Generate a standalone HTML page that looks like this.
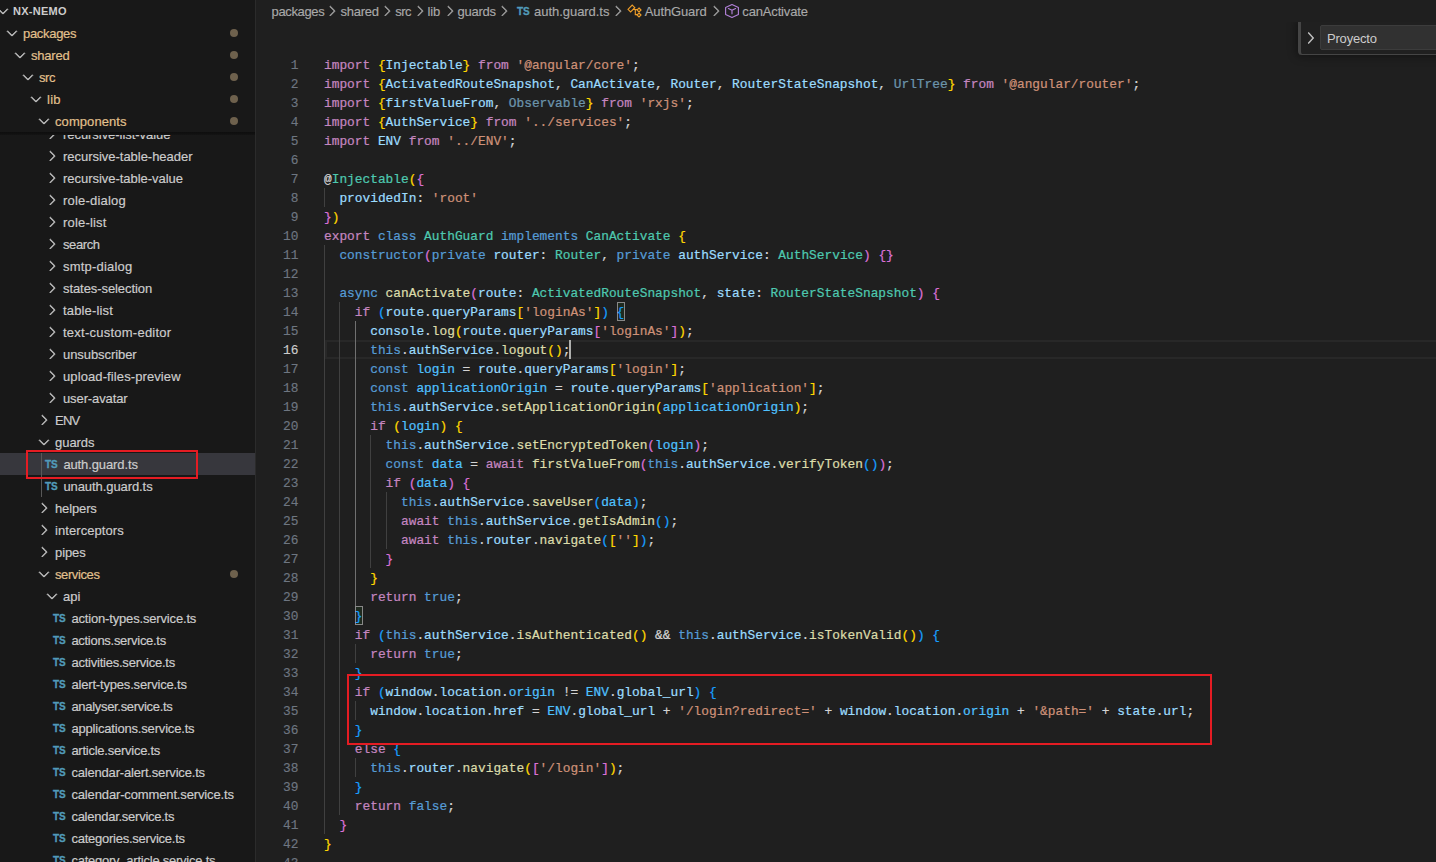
<!DOCTYPE html>
<html lang="en"><head><meta charset="utf-8"><title>auth.guard.ts - nx-nemo</title>
<style>
*{box-sizing:border-box;margin:0;padding:0}
html,body{width:1436px;height:862px;overflow:hidden;background:#1f1f1f}
body{position:relative;font-family:"Liberation Sans",sans-serif;font-size:13px;color:#ccc}
#sb{position:absolute;left:0;top:0;width:256px;height:862px;background:#181818;border-right:1px solid #2b2b2b;overflow:hidden}
#sbs{position:absolute;left:0;top:0;width:255px;height:862px;overflow:hidden}
#stk{position:absolute;left:0;top:0;width:255px;height:132px;background:#181818;z-index:3}
#stk:after{content:'';position:absolute;left:0;top:132px;width:255px;height:3px;background:linear-gradient(#0e0e0e,#111 70%,#151515)}
.hd{position:absolute;left:0;top:0;width:255px;height:22px;line-height:22px}
.hd .cv{left:-5px}
.hd b{position:absolute;left:13px;top:0;font-size:11px;font-weight:700;color:#ccc;letter-spacing:.26px}
.row{position:absolute;left:0;width:255px;height:22px;line-height:22px;white-space:nowrap}
.row.sel{background:#37373d}
.row.mod .lb{color:#e2c08d}
.cv{position:absolute;top:3px;width:16px;height:16px}
.chev{width:16px;height:16px;fill:#ccc;stroke:#ccc;stroke-width:.55;display:block}
.lb{position:absolute;top:1px;-webkit-text-stroke:.18px}
.ts{position:absolute;top:1px;font-size:10px;font-weight:700;color:#519aba;letter-spacing:0;-webkit-text-stroke:.3px}
.dot{position:absolute;left:229.5px;top:7px;width:8px;height:8px;border-radius:50%;background:#6e614d}
.tg{position:absolute;width:1px;background:#585858;z-index:1}
.anno{position:absolute;border:2px solid #e51c23;z-index:9}
#ed{position:absolute;left:256px;top:0;width:1180px;height:862px;background:#1f1f1f;overflow:hidden}
#bc{position:absolute;left:0;top:0;width:1436px;height:22px;line-height:22px;color:#a9a9a9;white-space:nowrap;font-size:13px}
.bt{position:absolute;top:1px;-webkit-text-stroke:.15px}
.bi{position:absolute;top:3px;width:16px;height:16px}
.bi svg{width:16px;height:16px;display:block}
.bcv{fill:#a9a9a9;stroke:#a9a9a9;stroke-width:.55}
#code{position:absolute;left:0;top:0;width:1436px;height:862px;font-family:"Liberation Mono",monospace;font-size:12.83px;color:#d4d4d4;overflow:hidden}
.ln{position:absolute;left:256px;width:42.5px;height:19px;line-height:19px;text-align:right;color:#6e7681;white-space:pre;-webkit-text-stroke:.15px}
.ln.act{color:#ccc}
.cl{position:absolute;left:324px;height:19px;line-height:19px;white-space:pre;-webkit-text-stroke:.22px}
.k-k{color:#C586C0}.k-b{color:#569CD6}.k-v{color:#9CDCFE}.k-t{color:#4EC9B0}.k-f{color:#DCDCAA}.k-s{color:#CE9178}
.k-c{color:#4FC1FF}.k-1{color:#FFD700}.k-2{color:#DA70D6}.k-3{color:#179FFF}.k-d{color:#9CDCFE;opacity:.62}
.bm{position:absolute;width:8px;height:19px;border:1px solid #888;background:#1f2a1f}
.cur{position:absolute;left:569px;top:340px;width:2px;height:19px;background:#aeafad}
.ig{position:absolute;width:1px;background:#404040}
.ig.a{background:#707070}
#clh{position:absolute;left:325px;top:340px;width:1115px;height:19px;border:2px solid #282828}
#fwc{position:absolute;left:1270px;top:22px;width:166px;height:60px;overflow:hidden}
#fw{position:absolute;left:28px;top:0;width:150px;height:33px;background:#202020;border-left:3px solid #454545;border-bottom:1px solid #454545;border-bottom-left-radius:4px;box-shadow:0 0 8px 2px rgba(0,0,0,.36)}
#fw .in{position:absolute;left:19px;top:3px;width:140px;height:25px;background:#313131;border:1px solid #3c3c3c;border-radius:2px;line-height:25px;padding-left:6px;color:#ccc;font-size:13px;letter-spacing:-.2px}
#fw svg{position:absolute;left:2px;top:8px;width:16px;height:16px;fill:#ccc;stroke:#ccc;stroke-width:.5}
</style></head><body>
<div id="ed"></div>
<div id="code">
<div id="clh"></div><i class="bm" style="left:617px;top:302px"></i><i class="bm" style="left:355px;top:606px"></i><i class="cur"></i>
<i class="ig" style="left:324.0px;top:188px;height:19px"></i>
<i class="ig" style="left:324.0px;top:245px;height:589px"></i>
<i class="ig" style="left:339.4px;top:302px;height:513px"></i>
<i class="ig a" style="left:354.8px;top:321px;height:285px"></i>
<i class="ig" style="left:370.2px;top:435px;height:133px"></i>
<i class="ig" style="left:385.6px;top:492px;height:57px"></i>
<i class="ig" style="left:354.8px;top:644px;height:19px"></i>
<i class="ig" style="left:354.8px;top:701px;height:19px"></i>
<i class="ig" style="left:354.8px;top:758px;height:19px"></i>
<div class="ln" style="top:56px">1</div><div class="cl" style="top:56px"><span class="k-k">import</span> <span class="k-1">{</span><span class="k-v">Injectable</span><span class="k-1">}</span> <span class="k-k">from</span> <span class="k-s">'@angular/core'</span>;</div>
<div class="ln" style="top:75px">2</div><div class="cl" style="top:75px"><span class="k-k">import</span> <span class="k-1">{</span><span class="k-v">ActivatedRouteSnapshot</span>, <span class="k-v">CanActivate</span>, <span class="k-v">Router</span>, <span class="k-v">RouterStateSnapshot</span>, <span class="k-d">UrlTree</span><span class="k-1">}</span> <span class="k-k">from</span> <span class="k-s">'@angular/router'</span>;</div>
<div class="ln" style="top:94px">3</div><div class="cl" style="top:94px"><span class="k-k">import</span> <span class="k-1">{</span><span class="k-v">firstValueFrom</span>, <span class="k-d">Observable</span><span class="k-1">}</span> <span class="k-k">from</span> <span class="k-s">'rxjs'</span>;</div>
<div class="ln" style="top:113px">4</div><div class="cl" style="top:113px"><span class="k-k">import</span> <span class="k-1">{</span><span class="k-v">AuthService</span><span class="k-1">}</span> <span class="k-k">from</span> <span class="k-s">'../services'</span>;</div>
<div class="ln" style="top:132px">5</div><div class="cl" style="top:132px"><span class="k-k">import</span> <span class="k-v">ENV</span> <span class="k-k">from</span> <span class="k-s">'../ENV'</span>;</div>
<div class="ln" style="top:151px">6</div><div class="cl" style="top:151px"></div>
<div class="ln" style="top:170px">7</div><div class="cl" style="top:170px">@<span class="k-t">Injectable</span><span class="k-1">(</span><span class="k-2">{</span></div>
<div class="ln" style="top:189px">8</div><div class="cl" style="top:189px">  <span class="k-v">providedIn</span>: <span class="k-s">'root'</span></div>
<div class="ln" style="top:208px">9</div><div class="cl" style="top:208px"><span class="k-2">}</span><span class="k-1">)</span></div>
<div class="ln" style="top:227px">10</div><div class="cl" style="top:227px"><span class="k-k">export</span> <span class="k-b">class</span> <span class="k-t">AuthGuard</span> <span class="k-b">implements</span> <span class="k-t">CanActivate</span> <span class="k-1">{</span></div>
<div class="ln" style="top:246px">11</div><div class="cl" style="top:246px">  <span class="k-b">constructor</span><span class="k-2">(</span><span class="k-b">private</span> <span class="k-v">router</span>: <span class="k-t">Router</span>, <span class="k-b">private</span> <span class="k-v">authService</span>: <span class="k-t">AuthService</span><span class="k-2">)</span> <span class="k-2">{}</span></div>
<div class="ln" style="top:265px">12</div><div class="cl" style="top:265px"></div>
<div class="ln" style="top:284px">13</div><div class="cl" style="top:284px">  <span class="k-b">async</span> <span class="k-f">canActivate</span><span class="k-2">(</span><span class="k-v">route</span>: <span class="k-t">ActivatedRouteSnapshot</span>, <span class="k-v">state</span>: <span class="k-t">RouterStateSnapshot</span><span class="k-2">)</span> <span class="k-2">{</span></div>
<div class="ln" style="top:303px">14</div><div class="cl" style="top:303px">    <span class="k-k">if</span> <span class="k-3">(</span><span class="k-v">route</span>.<span class="k-v">queryParams</span><span class="k-1">[</span><span class="k-s">'loginAs'</span><span class="k-1">]</span><span class="k-3">)</span> <span class="k-3">{</span></div>
<div class="ln" style="top:322px">15</div><div class="cl" style="top:322px">      <span class="k-v">console</span>.<span class="k-f">log</span><span class="k-1">(</span><span class="k-v">route</span>.<span class="k-v">queryParams</span><span class="k-2">[</span><span class="k-s">'loginAs'</span><span class="k-2">]</span><span class="k-1">)</span>;</div>
<div class="ln act" style="top:341px">16</div><div class="cl" style="top:341px">      <span class="k-b">this</span>.<span class="k-v">authService</span>.<span class="k-f">logout</span><span class="k-1">()</span>;</div>
<div class="ln" style="top:360px">17</div><div class="cl" style="top:360px">      <span class="k-b">const</span> <span class="k-c">login</span> = <span class="k-v">route</span>.<span class="k-v">queryParams</span><span class="k-1">[</span><span class="k-s">'login'</span><span class="k-1">]</span>;</div>
<div class="ln" style="top:379px">18</div><div class="cl" style="top:379px">      <span class="k-b">const</span> <span class="k-c">applicationOrigin</span> = <span class="k-v">route</span>.<span class="k-v">queryParams</span><span class="k-1">[</span><span class="k-s">'application'</span><span class="k-1">]</span>;</div>
<div class="ln" style="top:398px">19</div><div class="cl" style="top:398px">      <span class="k-b">this</span>.<span class="k-v">authService</span>.<span class="k-f">setApplicationOrigin</span><span class="k-1">(</span><span class="k-c">applicationOrigin</span><span class="k-1">)</span>;</div>
<div class="ln" style="top:417px">20</div><div class="cl" style="top:417px">      <span class="k-k">if</span> <span class="k-1">(</span><span class="k-c">login</span><span class="k-1">)</span> <span class="k-1">{</span></div>
<div class="ln" style="top:436px">21</div><div class="cl" style="top:436px">        <span class="k-b">this</span>.<span class="k-v">authService</span>.<span class="k-f">setEncryptedToken</span><span class="k-2">(</span><span class="k-c">login</span><span class="k-2">)</span>;</div>
<div class="ln" style="top:455px">22</div><div class="cl" style="top:455px">        <span class="k-b">const</span> <span class="k-c">data</span> = <span class="k-k">await</span> <span class="k-f">firstValueFrom</span><span class="k-2">(</span><span class="k-b">this</span>.<span class="k-v">authService</span>.<span class="k-f">verifyToken</span><span class="k-3">()</span><span class="k-2">)</span>;</div>
<div class="ln" style="top:474px">23</div><div class="cl" style="top:474px">        <span class="k-k">if</span> <span class="k-2">(</span><span class="k-c">data</span><span class="k-2">)</span> <span class="k-2">{</span></div>
<div class="ln" style="top:493px">24</div><div class="cl" style="top:493px">          <span class="k-b">this</span>.<span class="k-v">authService</span>.<span class="k-f">saveUser</span><span class="k-3">(</span><span class="k-c">data</span><span class="k-3">)</span>;</div>
<div class="ln" style="top:512px">25</div><div class="cl" style="top:512px">          <span class="k-k">await</span> <span class="k-b">this</span>.<span class="k-v">authService</span>.<span class="k-f">getIsAdmin</span><span class="k-3">()</span>;</div>
<div class="ln" style="top:531px">26</div><div class="cl" style="top:531px">          <span class="k-k">await</span> <span class="k-b">this</span>.<span class="k-v">router</span>.<span class="k-f">navigate</span><span class="k-3">(</span><span class="k-1">[</span><span class="k-s">''</span><span class="k-1">]</span><span class="k-3">)</span>;</div>
<div class="ln" style="top:550px">27</div><div class="cl" style="top:550px">        <span class="k-2">}</span></div>
<div class="ln" style="top:569px">28</div><div class="cl" style="top:569px">      <span class="k-1">}</span></div>
<div class="ln" style="top:588px">29</div><div class="cl" style="top:588px">      <span class="k-k">return</span> <span class="k-b">true</span>;</div>
<div class="ln" style="top:607px">30</div><div class="cl" style="top:607px">    <span class="k-3">}</span></div>
<div class="ln" style="top:626px">31</div><div class="cl" style="top:626px">    <span class="k-k">if</span> <span class="k-3">(</span><span class="k-b">this</span>.<span class="k-v">authService</span>.<span class="k-f">isAuthenticated</span><span class="k-1">()</span> &amp;&amp; <span class="k-b">this</span>.<span class="k-v">authService</span>.<span class="k-f">isTokenValid</span><span class="k-1">()</span><span class="k-3">)</span> <span class="k-3">{</span></div>
<div class="ln" style="top:645px">32</div><div class="cl" style="top:645px">      <span class="k-k">return</span> <span class="k-b">true</span>;</div>
<div class="ln" style="top:664px">33</div><div class="cl" style="top:664px">    <span class="k-3">}</span></div>
<div class="ln" style="top:683px">34</div><div class="cl" style="top:683px">    <span class="k-k">if</span> <span class="k-3">(</span><span class="k-v">window</span>.<span class="k-v">location</span>.<span class="k-c">origin</span> != <span class="k-c">ENV</span>.<span class="k-v">global_url</span><span class="k-3">)</span> <span class="k-3">{</span></div>
<div class="ln" style="top:702px">35</div><div class="cl" style="top:702px">      <span class="k-v">window</span>.<span class="k-v">location</span>.<span class="k-v">href</span> = <span class="k-c">ENV</span>.<span class="k-v">global_url</span> + <span class="k-s">'/login?redirect='</span> + <span class="k-v">window</span>.<span class="k-v">location</span>.<span class="k-c">origin</span> + <span class="k-s">'&amp;path='</span> + <span class="k-v">state</span>.<span class="k-v">url</span>;</div>
<div class="ln" style="top:721px">36</div><div class="cl" style="top:721px">    <span class="k-3">}</span></div>
<div class="ln" style="top:740px">37</div><div class="cl" style="top:740px">    <span class="k-k">else</span> <span class="k-3">{</span></div>
<div class="ln" style="top:759px">38</div><div class="cl" style="top:759px">      <span class="k-b">this</span>.<span class="k-v">router</span>.<span class="k-f">navigate</span><span class="k-1">(</span><span class="k-2">[</span><span class="k-s">'/login'</span><span class="k-2">]</span><span class="k-1">)</span>;</div>
<div class="ln" style="top:778px">39</div><div class="cl" style="top:778px">    <span class="k-3">}</span></div>
<div class="ln" style="top:797px">40</div><div class="cl" style="top:797px">    <span class="k-k">return</span> <span class="k-b">false</span>;</div>
<div class="ln" style="top:816px">41</div><div class="cl" style="top:816px">  <span class="k-2">}</span></div>
<div class="ln" style="top:835px">42</div><div class="cl" style="top:835px"><span class="k-1">}</span></div>
<div class="ln" style="top:854px">43</div><div class="cl" style="top:854px"></div>
</div>
<div id="bc"><span class="bt" style="left:271.6px;letter-spacing:-0.370px">packages</span><span class="bi" style="left:324.3px"><svg class="chev bcv" viewBox="0 0 16 16"><path d="M10.072 8.024L5.715 3.667l.618-.62L11 7.716v.618L6.333 13l-.618-.619 4.357-4.357z"/></svg></span><span class="bt" style="left:340.5px;letter-spacing:-0.258px">shared</span><span class="bi" style="left:378.6px"><svg class="chev bcv" viewBox="0 0 16 16"><path d="M10.072 8.024L5.715 3.667l.618-.62L11 7.716v.618L6.333 13l-.618-.619 4.357-4.357z"/></svg></span><span class="bt" style="left:395.2px;letter-spacing:-0.515px">src</span><span class="bi" style="left:411.5px"><svg class="chev bcv" viewBox="0 0 16 16"><path d="M10.072 8.024L5.715 3.667l.618-.62L11 7.716v.618L6.333 13l-.618-.619 4.357-4.357z"/></svg></span><span class="bt" style="left:427.4px;letter-spacing:-0.039px">lib</span><span class="bi" style="left:441.7px"><svg class="chev bcv" viewBox="0 0 16 16"><path d="M10.072 8.024L5.715 3.667l.618-.62L11 7.716v.618L6.333 13l-.618-.619 4.357-4.357z"/></svg></span><span class="bt" style="left:457.5px;letter-spacing:-0.225px">guards</span><span class="bi" style="left:496.3px"><svg class="chev bcv" viewBox="0 0 16 16"><path d="M10.072 8.024L5.715 3.667l.618-.62L11 7.716v.618L6.333 13l-.618-.619 4.357-4.357z"/></svg></span><span class="ts" style="left:517.0px">TS</span><span class="bt" style="left:534.1px;letter-spacing:-0.045px">auth.guard.ts</span><span class="bi" style="left:609.8px"><svg class="chev bcv" viewBox="0 0 16 16"><path d="M10.072 8.024L5.715 3.667l.618-.62L11 7.716v.618L6.333 13l-.618-.619 4.357-4.357z"/></svg></span><span class="bi" style="left:627.0px;top:3.4px"><svg viewBox="0 0 16 16" style="fill:none;stroke:#EE9D28;stroke-width:1.15"><path d="M1 6.3 5.2 2.1 7.8 4.7 3.6 8.9zM5.9 6.5H10M8.3 6.5v5.1H10M12 5l2 2-2 2-2-2zM12 10l2 2-2 2-2-2z"/></svg></span><span class="bt" style="left:644.8px;letter-spacing:-0.131px">AuthGuard</span><span class="bi" style="left:707.5px"><svg class="chev bcv" viewBox="0 0 16 16"><path d="M10.072 8.024L5.715 3.667l.618-.62L11 7.716v.618L6.333 13l-.618-.619 4.357-4.357z"/></svg></span><span class="bi" style="left:723.7px"><svg viewBox="0 0 16 16" style="fill:none;stroke:#B180D7;stroke-width:1.15;stroke-linejoin:round;stroke-linecap:round"><path d="M8 1.5l6.4 3v7L8 14.5l-6.4-3v-7zM4.4 5.5 8 7.3l3.6-1.8M8 7.3v3.5"/></svg></span><span class="bt" style="left:742.3px;letter-spacing:-0.155px">canActivate</span></div>
<div id="fwc"><div id="fw"><svg viewBox="0 0 16 16"><path d="M5.7 13.7 5 13l4.6-5L5 3l.7-.7L10.9 8z"/></svg><div class="in">Proyecto</div></div></div>
<div id="sb">
<div id="sbs">
<div class="row" style="top:123px"><span class="cv" style="left:44px"><svg class="chev" viewBox="0 0 16 16"><path d="M10.072 8.024L5.715 3.667l.618-.62L11 7.716v.618L6.333 13l-.618-.619 4.357-4.357z"/></svg></span><span class="lb" style="left:63.0px;letter-spacing:-0.049px">recursive-list-value</span></div>
<div class="row" style="top:145px"><span class="cv" style="left:44px"><svg class="chev" viewBox="0 0 16 16"><path d="M10.072 8.024L5.715 3.667l.618-.62L11 7.716v.618L6.333 13l-.618-.619 4.357-4.357z"/></svg></span><span class="lb" style="left:63.0px;letter-spacing:-0.026px">recursive-table-header</span></div>
<div class="row" style="top:167px"><span class="cv" style="left:44px"><svg class="chev" viewBox="0 0 16 16"><path d="M10.072 8.024L5.715 3.667l.618-.62L11 7.716v.618L6.333 13l-.618-.619 4.357-4.357z"/></svg></span><span class="lb" style="left:63.0px;letter-spacing:-0.032px">recursive-table-value</span></div>
<div class="row" style="top:189px"><span class="cv" style="left:44px"><svg class="chev" viewBox="0 0 16 16"><path d="M10.072 8.024L5.715 3.667l.618-.62L11 7.716v.618L6.333 13l-.618-.619 4.357-4.357z"/></svg></span><span class="lb" style="left:63.0px;letter-spacing:0.209px">role-dialog</span></div>
<div class="row" style="top:211px"><span class="cv" style="left:44px"><svg class="chev" viewBox="0 0 16 16"><path d="M10.072 8.024L5.715 3.667l.618-.62L11 7.716v.618L6.333 13l-.618-.619 4.357-4.357z"/></svg></span><span class="lb" style="left:63.0px;letter-spacing:0.177px">role-list</span></div>
<div class="row" style="top:233px"><span class="cv" style="left:44px"><svg class="chev" viewBox="0 0 16 16"><path d="M10.072 8.024L5.715 3.667l.618-.62L11 7.716v.618L6.333 13l-.618-.619 4.357-4.357z"/></svg></span><span class="lb" style="left:63.0px;letter-spacing:-0.389px">search</span></div>
<div class="row" style="top:255px"><span class="cv" style="left:44px"><svg class="chev" viewBox="0 0 16 16"><path d="M10.072 8.024L5.715 3.667l.618-.62L11 7.716v.618L6.333 13l-.618-.619 4.357-4.357z"/></svg></span><span class="lb" style="left:63.0px;letter-spacing:0.191px">smtp-dialog</span></div>
<div class="row" style="top:277px"><span class="cv" style="left:44px"><svg class="chev" viewBox="0 0 16 16"><path d="M10.072 8.024L5.715 3.667l.618-.62L11 7.716v.618L6.333 13l-.618-.619 4.357-4.357z"/></svg></span><span class="lb" style="left:63.0px;letter-spacing:-0.077px">states-selection</span></div>
<div class="row" style="top:299px"><span class="cv" style="left:44px"><svg class="chev" viewBox="0 0 16 16"><path d="M10.072 8.024L5.715 3.667l.618-.62L11 7.716v.618L6.333 13l-.618-.619 4.357-4.357z"/></svg></span><span class="lb" style="left:63.0px;letter-spacing:0.158px">table-list</span></div>
<div class="row" style="top:321px"><span class="cv" style="left:44px"><svg class="chev" viewBox="0 0 16 16"><path d="M10.072 8.024L5.715 3.667l.618-.62L11 7.716v.618L6.333 13l-.618-.619 4.357-4.357z"/></svg></span><span class="lb" style="left:63.0px;letter-spacing:0.242px">text-custom-editor</span></div>
<div class="row" style="top:343px"><span class="cv" style="left:44px"><svg class="chev" viewBox="0 0 16 16"><path d="M10.072 8.024L5.715 3.667l.618-.62L11 7.716v.618L6.333 13l-.618-.619 4.357-4.357z"/></svg></span><span class="lb" style="left:63.0px;letter-spacing:-0.070px">unsubscriber</span></div>
<div class="row" style="top:365px"><span class="cv" style="left:44px"><svg class="chev" viewBox="0 0 16 16"><path d="M10.072 8.024L5.715 3.667l.618-.62L11 7.716v.618L6.333 13l-.618-.619 4.357-4.357z"/></svg></span><span class="lb" style="left:63.0px;letter-spacing:0.104px">upload-files-preview</span></div>
<div class="row" style="top:387px"><span class="cv" style="left:44px"><svg class="chev" viewBox="0 0 16 16"><path d="M10.072 8.024L5.715 3.667l.618-.62L11 7.716v.618L6.333 13l-.618-.619 4.357-4.357z"/></svg></span><span class="lb" style="left:63.0px;letter-spacing:-0.105px">user-avatar</span></div>
<div class="row" style="top:409px"><span class="cv" style="left:36px"><svg class="chev" viewBox="0 0 16 16"><path d="M10.072 8.024L5.715 3.667l.618-.62L11 7.716v.618L6.333 13l-.618-.619 4.357-4.357z"/></svg></span><span class="lb" style="left:55.0px;letter-spacing:-0.778px">ENV</span></div>
<div class="row" style="top:431px"><span class="cv" style="left:36px"><svg class="chev" viewBox="0 0 16 16"><path d="M7.976 10.072l4.357-4.357.62.618L8.284 11h-.618L3 6.333l.619-.618 4.357 4.357z"/></svg></span><span class="lb" style="left:55.0px;letter-spacing:-0.042px">guards</span></div>
<div class="row sel" style="top:453px"><span class="ts" style="left:45px">TS</span><span class="lb" style="left:63.4px;letter-spacing:-0.115px">auth.guard.ts</span></div>
<div class="row" style="top:475px"><span class="ts" style="left:45px">TS</span><span class="lb" style="left:63.4px;letter-spacing:-0.077px">unauth.guard.ts</span></div>
<div class="row" style="top:497px"><span class="cv" style="left:36px"><svg class="chev" viewBox="0 0 16 16"><path d="M10.072 8.024L5.715 3.667l.618-.62L11 7.716v.618L6.333 13l-.618-.619 4.357-4.357z"/></svg></span><span class="lb" style="left:55.0px;letter-spacing:-0.134px">helpers</span></div>
<div class="row" style="top:519px"><span class="cv" style="left:36px"><svg class="chev" viewBox="0 0 16 16"><path d="M10.072 8.024L5.715 3.667l.618-.62L11 7.716v.618L6.333 13l-.618-.619 4.357-4.357z"/></svg></span><span class="lb" style="left:55.0px;letter-spacing:0.073px">interceptors</span></div>
<div class="row" style="top:541px"><span class="cv" style="left:36px"><svg class="chev" viewBox="0 0 16 16"><path d="M10.072 8.024L5.715 3.667l.618-.62L11 7.716v.618L6.333 13l-.618-.619 4.357-4.357z"/></svg></span><span class="lb" style="left:55.0px;letter-spacing:-0.076px">pipes</span></div>
<div class="row mod" style="top:563px"><span class="cv" style="left:36px"><svg class="chev" viewBox="0 0 16 16"><path d="M7.976 10.072l4.357-4.357.62.618L8.284 11h-.618L3 6.333l.619-.618 4.357 4.357z"/></svg></span><span class="lb" style="left:55.0px;letter-spacing:-0.398px">services</span><i class="dot"></i></div>
<div class="row" style="top:585px"><span class="cv" style="left:44px"><svg class="chev" viewBox="0 0 16 16"><path d="M7.976 10.072l4.357-4.357.62.618L8.284 11h-.618L3 6.333l.619-.618 4.357 4.357z"/></svg></span><span class="lb" style="left:63.0px;letter-spacing:0.047px">api</span></div>
<div class="row" style="top:607px"><span class="ts" style="left:53px">TS</span><span class="lb" style="left:71.4px;letter-spacing:-0.166px">action-types.service.ts</span></div>
<div class="row" style="top:629px"><span class="ts" style="left:53px">TS</span><span class="lb" style="left:71.4px;letter-spacing:-0.289px">actions.service.ts</span></div>
<div class="row" style="top:651px"><span class="ts" style="left:53px">TS</span><span class="lb" style="left:71.4px;letter-spacing:-0.227px">activities.service.ts</span></div>
<div class="row" style="top:673px"><span class="ts" style="left:53px">TS</span><span class="lb" style="left:71.4px;letter-spacing:-0.173px">alert-types.service.ts</span></div>
<div class="row" style="top:695px"><span class="ts" style="left:53px">TS</span><span class="lb" style="left:71.4px;letter-spacing:-0.307px">analyser.service.ts</span></div>
<div class="row" style="top:717px"><span class="ts" style="left:53px">TS</span><span class="lb" style="left:71.4px;letter-spacing:-0.181px">applications.service.ts</span></div>
<div class="row" style="top:739px"><span class="ts" style="left:53px">TS</span><span class="lb" style="left:71.4px;letter-spacing:-0.250px">article.service.ts</span></div>
<div class="row" style="top:761px"><span class="ts" style="left:53px">TS</span><span class="lb" style="left:71.4px;letter-spacing:-0.180px">calendar-alert.service.ts</span></div>
<div class="row" style="top:783px"><span class="ts" style="left:53px">TS</span><span class="lb" style="left:71.4px;letter-spacing:-0.136px">calendar-comment.service.ts</span></div>
<div class="row" style="top:805px"><span class="ts" style="left:53px">TS</span><span class="lb" style="left:71.4px;letter-spacing:-0.256px">calendar.service.ts</span></div>
<div class="row" style="top:827px"><span class="ts" style="left:53px">TS</span><span class="lb" style="left:71.4px;letter-spacing:-0.243px">categories.service.ts</span></div>
<div class="row" style="top:849px"><span class="ts" style="left:53px">TS</span><span class="lb" style="left:71.4px;letter-spacing:-0.236px">category_article.service.ts</span></div>
<i class="tg" style="left:41px;top:453px;height:44px"></i>
</div>
<div id="stk">
<div class="hd"><span class="cv"><svg class="chev" viewBox="0 0 16 16"><path d="M7.976 10.072l4.357-4.357.62.618L8.284 11h-.618L3 6.333l.619-.618 4.357 4.357z"/></svg></span><b>NX-NEMO</b></div>
<div class="row mod" style="top:22px"><span class="cv" style="left:4px"><svg class="chev" viewBox="0 0 16 16"><path d="M7.976 10.072l4.357-4.357.62.618L8.284 11h-.618L3 6.333l.619-.618 4.357 4.357z"/></svg></span><span class="lb" style="left:23.0px;letter-spacing:-0.307px">packages</span><i class="dot"></i></div>
<div class="row mod" style="top:44px"><span class="cv" style="left:12px"><svg class="chev" viewBox="0 0 16 16"><path d="M7.976 10.072l4.357-4.357.62.618L8.284 11h-.618L3 6.333l.619-.618 4.357 4.357z"/></svg></span><span class="lb" style="left:31.0px;letter-spacing:-0.225px">shared</span><i class="dot"></i></div>
<div class="row mod" style="top:66px"><span class="cv" style="left:20px"><svg class="chev" viewBox="0 0 16 16"><path d="M7.976 10.072l4.357-4.357.62.618L8.284 11h-.618L3 6.333l.619-.618 4.357 4.357z"/></svg></span><span class="lb" style="left:39.0px;letter-spacing:-0.415px">src</span><i class="dot"></i></div>
<div class="row mod" style="top:88px"><span class="cv" style="left:28px"><svg class="chev" viewBox="0 0 16 16"><path d="M7.976 10.072l4.357-4.357.62.618L8.284 11h-.618L3 6.333l.619-.618 4.357 4.357z"/></svg></span><span class="lb" style="left:47.0px;letter-spacing:0.295px">lib</span><i class="dot"></i></div>
<div class="row mod" style="top:110px"><span class="cv" style="left:36px"><svg class="chev" viewBox="0 0 16 16"><path d="M7.976 10.072l4.357-4.357.62.618L8.284 11h-.618L3 6.333l.619-.618 4.357 4.357z"/></svg></span><span class="lb" style="left:55.0px;letter-spacing:0.077px">components</span><i class="dot"></i></div>
</div>
</div>
<div class="anno" style="left:26px;top:450px;width:172px;height:29px"></div>
<div class="anno" style="left:347px;top:674px;width:865px;height:71px"></div>
</body></html>
